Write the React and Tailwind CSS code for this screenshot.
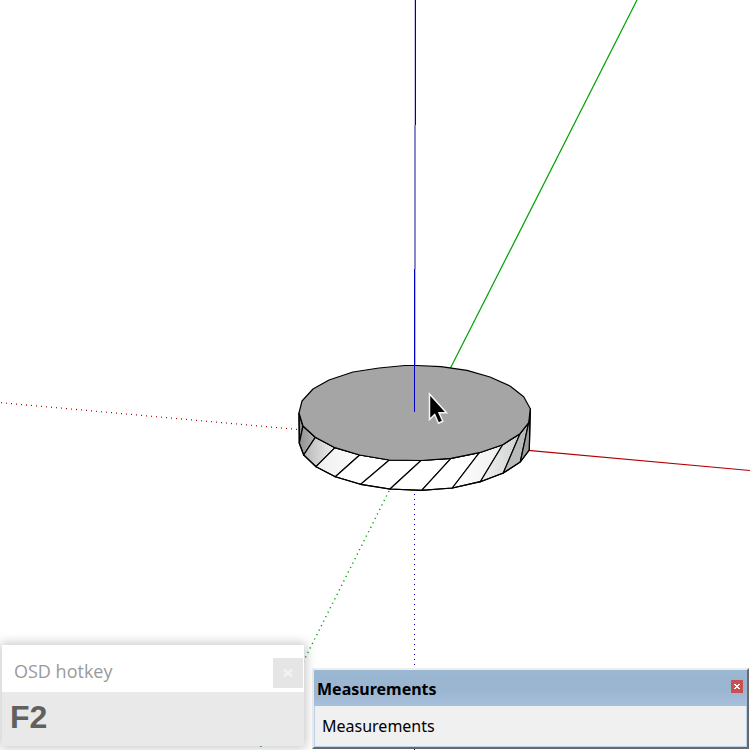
const topFace =
  "299,413 302,401 313,389 329,380 353,372 379,368 405,365.5 417,365.5 441,366.7 467,370.3 490,377 510,386 523.7,396.7 530.3,408.7 528.7,422.7 520,433.7 502.7,444.7 479.3,452.7 451,458.3 421,460.5 389.3,460 359.7,455 335,447.7 315.3,437.3 303,426";

const outline =
  "299,413 303,426 315.3,437.3 335,447.7 359.7,455 389.3,460 421,460.5 451,458.3 479.3,452.7 502.7,444.7 520,433.7 528.7,422.7 530.3,408.7 529.3,450 520.3,462 503.3,473 480.3,481.7 452.3,488 421.7,490.3 390,489 360.7,484.3 335.3,476.7 316,466.7 303.7,455 299.3,443.3";

const sides = [
  { fill: "#8f8f8f", points: "299,413 303,426 299.3,443.3" },
  { fill: "url(#side-left-dark)", points: "303,426 315.3,437.3 303.7,455 299.3,443.3" },
  { fill: "url(#side-left)", points: "315.3,437.3 335,447.7 316,466.7 303.7,455" },
  { fill: "url(#side-left-light)", points: "335,447.7 359.7,455 335.3,476.7 316,466.7" },
  { fill: "#ffffff", points: "359.7,455 389.3,460 360.7,484.3 335.3,476.7" },
  { fill: "#ffffff", points: "389.3,460 421,460.5 390,489 360.7,484.3" },
  { fill: "#ffffff", points: "421,460.5 451,458.3 421.7,490.3 390,489" },
  { fill: "#ffffff", points: "451,458.3 479.3,452.7 452.3,488 421.7,490.3" },
  { fill: "url(#side-right-light)", points: "479.3,452.7 502.7,444.7 480.3,481.7 452.3,488" },
  { fill: "url(#side-right)", points: "502.7,444.7 520,433.7 503.3,473 480.3,481.7" },
  { fill: "#b9bbbb", points: "520,433.7 528.7,422.7 520.3,462 503.3,473" },
  { fill: "#9b9b9b", points: "528.7,422.7 530.3,408.7 529.3,450 520.3,462" },
];

const gradients = [
  { id: "side-left-dark", from: "#929292", to: "#b4b4b4" },
  { id: "side-left", from: "#b8b8b8", to: "#eeeeee" },
  { id: "side-left-light", from: "#eeeeee", to: "#fcfcfc" },
  { id: "side-right-light", from: "#ffffff", to: "#eeeeee" },
  { id: "side-right", from: "#f0f1f1", to: "#cfd1d1" },
];

const Scene = () => (
  <svg
    className="absolute inset-0 h-full w-full"
    viewBox="0 0 750 750"
    preserveAspectRatio="xMidYMid slice"
    fill="none"
    aria-hidden="true"
  >
    <defs>
      {gradients.map((item) => (
        <linearGradient key={item.id} id={item.id}>
          <stop offset="0" stopColor={item.from} />
          <stop offset="1" stopColor={item.to} />
        </linearGradient>
      ))}
    </defs>

    {/* negative axes */}
    <path d="M1 402.7 L298 429.5" stroke="#b00000" strokeWidth="1.2" strokeDasharray="1 4.02" />
    <path d="M389 491 L260 748" stroke="#00a000" strokeWidth="1.4" strokeDasharray="1.2 3.8" />
    <path d="M414.5 494 V750" stroke="#0000b8" strokeDasharray="1 4" />

    {/* positive axes */}
    <path d="M528 450.3 L750 470.5" stroke="#b40000" strokeWidth="1.2" />
    <path d="M450 369 L637 0" stroke="#00a000" strokeWidth="1.2" />

    {sides.map((side) => (
      <polygon key={side.points} points={side.points} fill={side.fill} stroke="#000" strokeWidth="1.2" />
    ))}
    <polygon points={outline} stroke="#000" strokeWidth="1.2" strokeLinejoin="round" />
    <polygon points={topFace} fill="#a5a5a5" stroke="#000" strokeWidth="1.2" strokeLinejoin="round" />

    <path d="M415.5 0 V125" stroke="#0000a4" />
    <path d="M414.5 0 V125" stroke="#c9c9e4" />
    <path d="M415 125 V269" stroke="#8888cb" strokeWidth="2" />
    <path d="M415.5 269 V365" stroke="#b9b9e2" />
    <path d="M414.5 269 V412" stroke="#0000c8" />

    {/* mouse pointer */}
    <path
      d="M429.5 394 V419.5 L434.7 414.5 L438.5 423.2 L442.8 421.3 L439 412.7 H446.5 Z"
      fill="#000"
      stroke="#f4f4f4"
      strokeWidth="1.5"
    />
  </svg>
);

const HotkeyPanel = () => (
  <section className="mb-1 ml-0.5 w-full max-w-[302px] bg-white shadow-[0_0_10px_2px_rgba(0,0,0,0.22)]">
    <header className="flex h-[47px] items-center justify-between pl-3 pr-px pt-1">
      <h2 className="font-['Open_Sans','Noto_Sans',sans-serif] text-[18px] leading-6 text-[#9a9a9a]">
        OSD hotkey
      </h2>
      <button
        type="button"
        aria-label="Close hotkey panel"
        className="mt-1 flex size-[30px] items-center justify-center bg-[#e5e5e5]"
      >
        <svg width="10" height="8" viewBox="0 0 10 8" fill="none" stroke="#f3f3f3" strokeWidth="2.4">
          <path d="M1 0.5 L9 7.5 M9 0.5 L1 7.5" />
        </svg>
      </button>
    </header>
    <p className="h-[54px] bg-[#e9e9e9] px-2 py-[7px] font-['Liberation_Sans',sans-serif] text-[32px] leading-9 font-bold text-[#606060]">
      F2
    </p>
  </section>
);

const MeasurementsPanel = () => (
  <section className="mr-px mb-px flex-1 border-2 border-t-[#eeeeee] border-l-[#e8e8e8] border-r-[#696969] border-b-[#696969] bg-[#b9d1ea] font-['Noto_Sans',sans-serif] text-black">
    <header className="flex h-9 items-center justify-between bg-linear-to-b from-[#9ab8d4] via-[#9ab5cf] to-[#a6bfdd] pl-[3px] pr-1">
      <h2 className="pt-0.5 text-[16px] leading-6 font-bold">Measurements</h2>
      <button
        type="button"
        aria-label="Close measurements"
        className="mb-1 flex h-[13px] w-3 items-center justify-center bg-[#c75050]"
      >
        <svg width="6" height="5" viewBox="0 0 6 5" shapeRendering="crispEdges" fill="#fff">
          <path d="M0 0h2v1h2V0h2v1H5v1H4v1h1v1h1v1H4V4H2v1H0V4h1V3h1V2H1V1H0z" />
        </svg>
      </button>
    </header>
    <div className="mx-px mb-px flex h-10 items-center bg-[#f0f0f0] pl-[7px]">
      <p className="text-[16px] leading-6">Measurements</p>
    </div>
  </section>
);

const App = () => {
  return (
    <main className="relative flex min-h-screen flex-col justify-end overflow-hidden bg-white">
      <Scene />
      <div className="relative flex items-end gap-2">
        <HotkeyPanel />
        <MeasurementsPanel />
      </div>
    </main>
  );
};

export default App;
